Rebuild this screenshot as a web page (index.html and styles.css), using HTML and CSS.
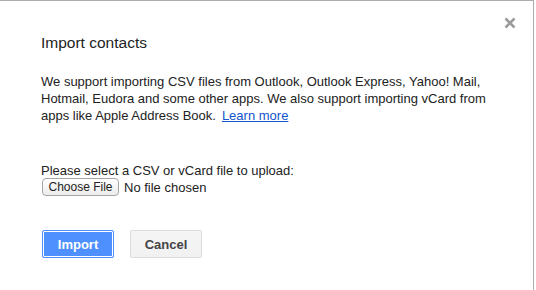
FILE: index.html
```html
<!DOCTYPE html>
<html lang="en">
<head>
  <meta charset="UTF-8">
  <title>Import contacts</title>
  <link rel="stylesheet" href="styles.css">
</head>
<body>

  <div class="dialog">
    <!-- bezáró gomb -->
    <span class="close" title="Close">
      <svg width="12" height="12" viewBox="0 0 12 12">
        <path d="M1.5 1.5 L10.5 10.5 M10.5 1.5 L1.5 10.5" stroke="#9a9a9a" stroke-width="2.6" stroke-linecap="butt"/>
      </svg>
    </span>

    <h1 class="title">Import contacts</h1>

    <p class="intro">
      We support importing CSV files from Outlook, Outlook Express, Yahoo! Mail,<br>
      Hotmail, Eudora and some other apps. We also support importing vCard from<br>
      apps like Apple Address Book.<a class="more" href="#">Learn more</a>
    </p>

    <div class="upload">
      <div class="upload-label">Please select a CSV or vCard file to upload:</div>
      <div class="file-row">
        <span class="file-btn">Choose File</span>
        <span class="file-name">No file chosen</span>
      </div>
    </div>

    <div class="actions">
      <button class="btn btn-primary" type="button">Import</button>
      <button class="btn" type="button">Cancel</button>
    </div>
  </div>

</body>
</html>
```

FILE: styles.css
```css
/* reset */
*, *::before, *::after {
  box-sizing: border-box;
}
html, body {
  margin: 0;
  padding: 0;
  background-color: #fff;
  font-family: Arial, "Liberation Sans", sans-serif;
  color: #222;
}

/* párbeszédablak */
.dialog {
  position: relative;
  width: 534px;
  height: 290px;
  padding: 30px 20px 0 41px;
  border-top: 1px solid #acacac;
  border-right: 1px solid #acacac;
  background: #fff;
}

/* bezáró X */
.close {
  position: absolute;
  top: 16px;
  right: 17px;
  width: 12px;
  height: 12px;
  cursor: pointer;
}
.close svg {
  display: block;
}

/* cím */
.title {
  margin: 0;
  font-size: 15.5px;
  font-weight: normal;
  line-height: 24px;
  color: #222;
}

/* leírás */
.intro {
  margin: 18px 0 0;
  font-size: 13px;
  line-height: 17px;
  white-space: nowrap;
}
.intro .more {
  margin-left: 6px;
  color: #15c;
  text-decoration: underline;
}

/* feltöltés */
.upload {
  margin-top: 38px;
  font-size: 13px;
}
.upload-label {
  line-height: 17px;
}
.file-row {
  display: flex;
  align-items: center;
  margin-top: -1px;
}
.file-btn {
  display: inline-block;
  width: 77px;
  height: 18px;
  margin-left: 1px;
  border: 1px solid #a6a6a6;
  border-radius: 4px;
  background: linear-gradient(#ffffff, #ececec);
  font-size: 12px;
  line-height: 16px;
  text-align: center;
  color: #222;
}
.file-name {
  margin-left: 5px;
  font-size: 13px;
}

/* gombok */
.actions {
  display: flex;
  gap: 16px;
  margin-top: 34px;
  padding-left: 1px;
}
.btn {
  min-width: 72px;
  height: 28px;
  padding: 0 8px;
  border: 1px solid #dcdcdc;
  border-radius: 2px;
  background: linear-gradient(#f5f5f5, #f1f1f1);
  font-family: Arial, "Liberation Sans", sans-serif;
  font-size: 13px;
  font-weight: bold;
  color: #444;
  cursor: pointer;
}
.btn-primary {
  border-color: #4d90fe;
  background: #4d90fe;
  box-shadow: inset 0 0 0 1px #fff;
  color: #fff;
}
```
